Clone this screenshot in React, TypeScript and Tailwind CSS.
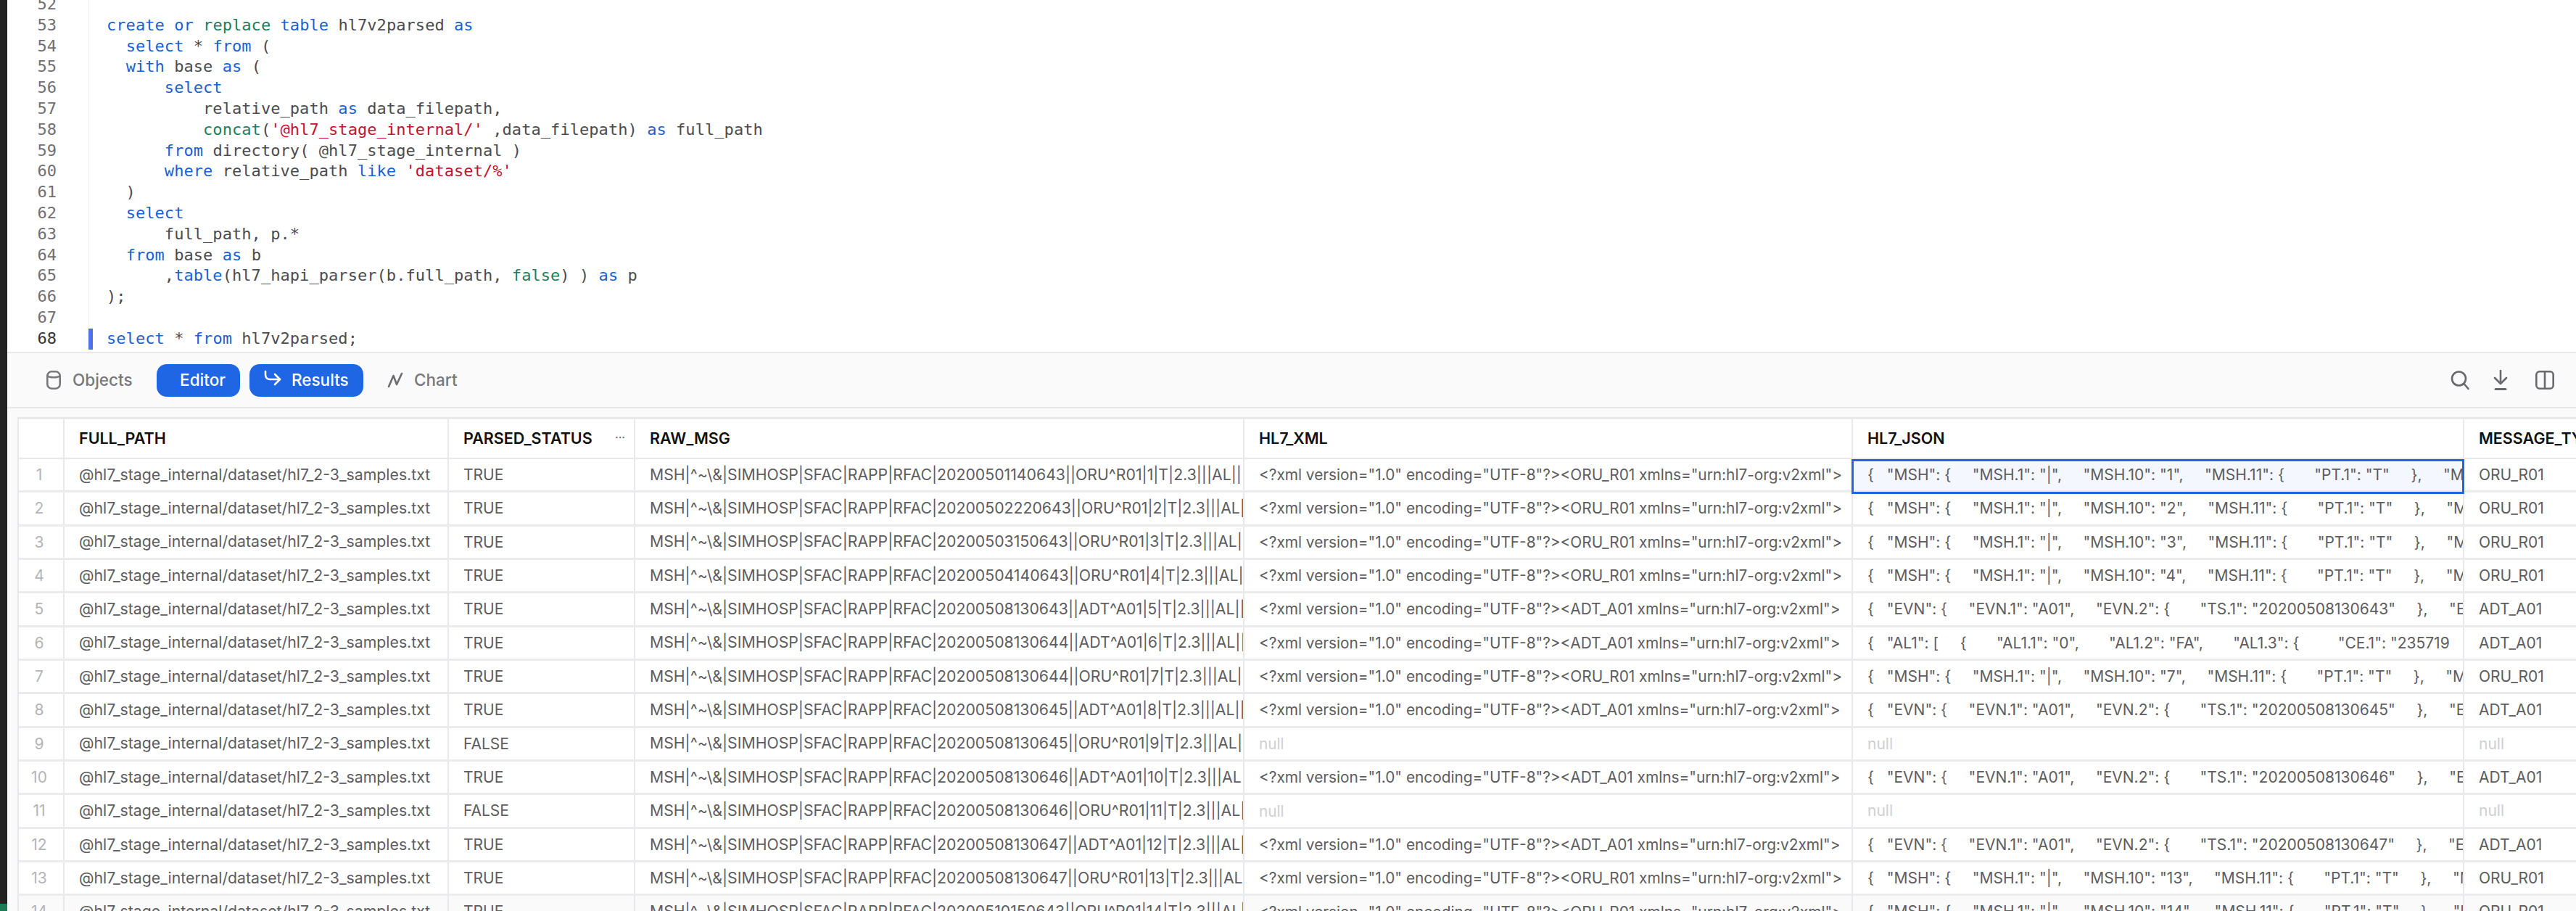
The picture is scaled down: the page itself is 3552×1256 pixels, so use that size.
import React from "react";

const K = ({ children }: { children: React.ReactNode }) => <span className="text-[#1a5fd6]">{children}</span>;
const F = ({ children }: { children: React.ReactNode }) => <span className="text-[#1b7f5c]">{children}</span>;
const S = ({ children }: { children: React.ReactNode }) => <span className="text-[#c4112f]">{children}</span>;

const codeLines: React.ReactNode[] = [
  "",
  <><K>create</K> <K>or</K> <F>replace</F> <K>table</K> hl7v2parsed <K>as</K></>,
  <>  <K>select</K> * <K>from</K> (</>,
  <>  <K>with</K> base <K>as</K> (</>,
  <>      <K>select</K></>,
  <>          relative_path <K>as</K> data_filepath,</>,
  <>          <F>concat</F>(<S>'@hl7_stage_internal/'</S> ,data_filepath) <K>as</K> full_path</>,
  <>      <K>from</K> directory( @hl7_stage_internal )</>,
  <>      <K>where</K> relative_path <K>like</K> <S>'dataset/%'</S></>,
  <>  )</>,
  <>  <K>select</K></>,
  <>      full_path, p.*</>,
  <>  <K>from</K> base <K>as</K> b</>,
  <>      ,<K>table</K>(hl7_hapi_parser(b.full_path, <F>false</F>) ) <K>as</K> p</>,
  <>);</>,
  "",
  <><K>select</K> * <K>from</K> hl7v2parsed;</>,
];

type Row = { ts: string; kind: "ORU" | "ADT"; ok: boolean; json?: string };
const rows: Row[] = [
  { ts: "20200501140643", kind: "ORU", ok: true },
  { ts: "20200502220643", kind: "ORU", ok: true },
  { ts: "20200503150643", kind: "ORU", ok: true },
  { ts: "20200504140643", kind: "ORU", ok: true },
  { ts: "20200508130643", kind: "ADT", ok: true },
  { ts: "20200508130644", kind: "ADT", ok: true, json: `{   "AL1": [     {       "AL1.1": "0",       "AL1.2": "FA",       "AL1.3": {         "CE.1": "235719` },
  { ts: "20200508130644", kind: "ORU", ok: true },
  { ts: "20200508130645", kind: "ADT", ok: true },
  { ts: "20200508130645", kind: "ORU", ok: false },
  { ts: "20200508130646", kind: "ADT", ok: true },
  { ts: "20200508130646", kind: "ORU", ok: false },
  { ts: "20200508130647", kind: "ADT", ok: true },
  { ts: "20200508130647", kind: "ORU", ok: true },
  { ts: "20200510150643", kind: "ORU", ok: true },
];

const jsonFor = (r: Row, n: number) =>
  r.json ??
  (r.kind === "ORU"
    ? `{   "MSH": {     "MSH.1": "|",     "MSH.10": "${n}",     "MSH.11": {       "PT.1": "T"     },     "MSH.12": {`
    : `{   "EVN": {     "EVN.1": "A01",     "EVN.2": {       "TS.1": "${r.ts}"     },     "EVN.6": {`);

const cell = "shrink-0 h-full flex items-center px-[20px] overflow-hidden whitespace-pre border-r-2 border-[#e8e8ea]";
const cols = {
  num: "w-[63px]",
  path: "w-[530px]",
  status: "w-[257px]",
  raw: "w-[840px]",
  xml: "w-[839px]",
  json: "w-[843px]",
};

const Null = () => <span className="text-[#cfcfd2]">null</span>;

export default function App() {
  return (
    <div className="flex h-[1256px] w-[3552px] overflow-hidden bg-white font-['Inter',sans-serif]">
      <div className="flex w-[10px] shrink-0 flex-col justify-between bg-[#222222]">
        <div />
        <div className="h-[10px] bg-[#1d7a57]" />
      </div>
      <div className="flex min-w-0 flex-1 flex-col">
        {/* editor */}
        <div className="h-[487px] shrink-0 overflow-hidden border-b-2 border-[#e8e8ea] bg-white">
          <div className="-mt-[8px] font-['DejaVu_Sans_Mono',monospace] text-[22px] leading-[28.8px] tracking-[0.06px]">
            {codeLines.map((line, i) => (
              <div key={i} className="flex h-[28.8px]">
                <div className={`w-[68px] shrink-0 text-right ${i === 16 ? "text-[#333333]" : "text-[#6f6f74]"}`}>{52 + i}</div>
                <div className={`ml-[44px] mr-[19px] w-[6px] shrink-0 ${i === 16 ? "bg-[#4a73e8]" : "bg-transparent border-l border-[#f1f1f2]"}`} />
                <div className="whitespace-pre text-[#4b4b50]">{line}</div>
              </div>
            ))}
          </div>
        </div>
        {/* toolbar */}
        <div className="flex h-[76px] shrink-0 items-center justify-between border-b-2 border-[#e8e8ea] bg-[#fafafa] pl-[54px] pr-[30px] text-[22.5px] font-medium">
          <div className="flex items-center">
            <div className="flex w-[119px] items-center gap-[16px] text-[#77777c]">
              <svg width="20" height="26" viewBox="0 0 20 26" fill="none" stroke="#77777c" strokeWidth="2.6" className="shrink-0">
                <rect x="1.3" y="1.3" width="17.4" height="23.4" rx="6" />
                <path d="M1.3 7c2 3 15.4 3 17.4 0" />
              </svg>
              <span>Objects</span>
            </div>
            <div className="ml-[33px] flex h-[45px] w-[115px] items-center justify-center rounded-[14px] bg-[#1f66e5] pl-[12px] text-white">Editor</div>
            <div className="ml-[13px] flex h-[45px] w-[157px] items-center gap-[14px] rounded-[14px] bg-[#1f66e5] pl-[20px] text-white">
              <svg width="24" height="22" viewBox="0 0 24 22" fill="none" stroke="white" strokeWidth="2.6" strokeLinecap="round" strokeLinejoin="round" className="-mt-[6px] shrink-0">
                <path d="M2 2v5c0 4 3 6 6 6h14" />
                <path d="M15 6l7 7-7 7" />
              </svg>
              <span>Results</span>
            </div>
            <div className="ml-[33px] flex items-center gap-[15px] text-[#77777c]">
              <svg width="22" height="22" viewBox="0 0 22 22" fill="none" stroke="#6c6c71" strokeWidth="2.6" strokeLinecap="round" strokeLinejoin="round">
                <path d="M2 20L8.5 5l4.5 12L20 2" />
              </svg>
              <span>Chart</span>
            </div>
          </div>
          <div className="flex items-center">
            <svg width="26" height="28" viewBox="0 0 26 28" fill="none" stroke="#68686d" strokeWidth="2.6" strokeLinecap="round" className="mr-[32px]">
              <circle cx="11.5" cy="12" r="9.5" />
              <path d="M18.5 19l6 7" />
            </svg>
            <svg width="22" height="28" viewBox="0 0 22 28" fill="none" stroke="#68686d" strokeWidth="2.6" strokeLinecap="round" strokeLinejoin="round" className="mr-[37px]">
              <path d="M11 1v17" />
              <path d="M3 11l8 8 8-8" />
              <path d="M4 26.5h14" strokeWidth="3" />
            </svg>
            <svg width="26" height="26" viewBox="0 0 26 26" fill="none" stroke="#68686d" strokeWidth="2.6">
              <rect x="1.3" y="1.3" width="23.4" height="23.4" rx="4.5" />
              <path d="M13 1.3v23.4" />
            </svg>
          </div>
        </div>
        {/* table */}
        <div className="min-h-0 flex-1 bg-[#fafafa] pl-[14px] pt-[12px]">
          <div className="h-full overflow-hidden border-l-2 border-t-[3px] border-[#e8e8ea] bg-white text-[21px] text-[#5c5c61]">
            <div className="flex h-[55px] border-b-2 border-[#e8e8ea] text-[21.5px] font-semibold text-[#111111]">
              <div className={`${cell} ${cols.num}`} />
              <div className={`${cell} ${cols.path}`}>FULL_PATH</div>
              <div className={`${cell} ${cols.status} justify-between`}>
                <span>PARSED_STATUS</span>
                <span className="-mr-[8px] -mt-[4px] text-[14px] font-bold leading-none text-[#77777c]">···</span>
              </div>
              <div className={`${cell} ${cols.raw}`}>RAW_MSG</div>
              <div className={`${cell} ${cols.xml}`}>HL7_XML</div>
              <div className={`${cell} ${cols.json}`}>HL7_JSON</div>
              <div className="flex h-full items-center overflow-hidden whitespace-pre pl-[20px]">MESSAGE_TYPE</div>
            </div>
            {rows.map((r, i) => {
              const n = i + 1;
              return (
                <div key={n} className={`relative flex h-[46.35px] border-b-[3px] border-[#ebebed] ${n === 14 ? "bg-[#fafafa]" : ""}`}>
                  <div className={`${cell} ${cols.num} justify-center !pl-0 !pr-[5px] text-[#b4b4b8]`}>{n}</div>
                  <div className={`${cell} ${cols.path} text-[21.25px]`}>@hl7_stage_internal/dataset/hl7_2-3_samples.txt</div>
                  <div className={`${cell} ${cols.status}`}>{r.ok ? "TRUE" : "FALSE"}</div>
                  <div className={`${cell} ${cols.raw} text-[21.25px]`}>{`MSH|^~\\&|SIMHOSP|SFAC|RAPP|RFAC|${r.ts}||${r.kind === "ORU" ? "ORU^R01" : "ADT^A01"}|${n}|T|2.3|||AL||`}</div>
                  <div className={`${cell} ${cols.xml} text-[20.8px]`}>
                    {r.ok ? `<?xml version="1.0" encoding="UTF-8"?><${r.kind}_${r.kind === "ORU" ? "R01" : "A01"} xmlns="urn:hl7-org:v2xml">` : <Null />}
                  </div>
                  <div className={`${cell} ${cols.json} ${n === 1 ? "bg-[#f4f7fe]" : ""}`}>
                    {r.ok ? jsonFor(r, n) : <Null />}
                  </div>
                  <div className="flex h-full items-center overflow-hidden whitespace-pre pl-[20px]">
                    {r.ok ? `${r.kind}_${r.kind === "ORU" ? "R01" : "A01"}` : <Null />}
                  </div>
                  {n === 1 && <div className="absolute left-[2527px] top-0 z-10 h-[48px] w-[845px] border-[3px] border-[#1f66e5]" />}
                </div>
              );
            })}
          </div>
        </div>
      </div>
    </div>
  );
}
